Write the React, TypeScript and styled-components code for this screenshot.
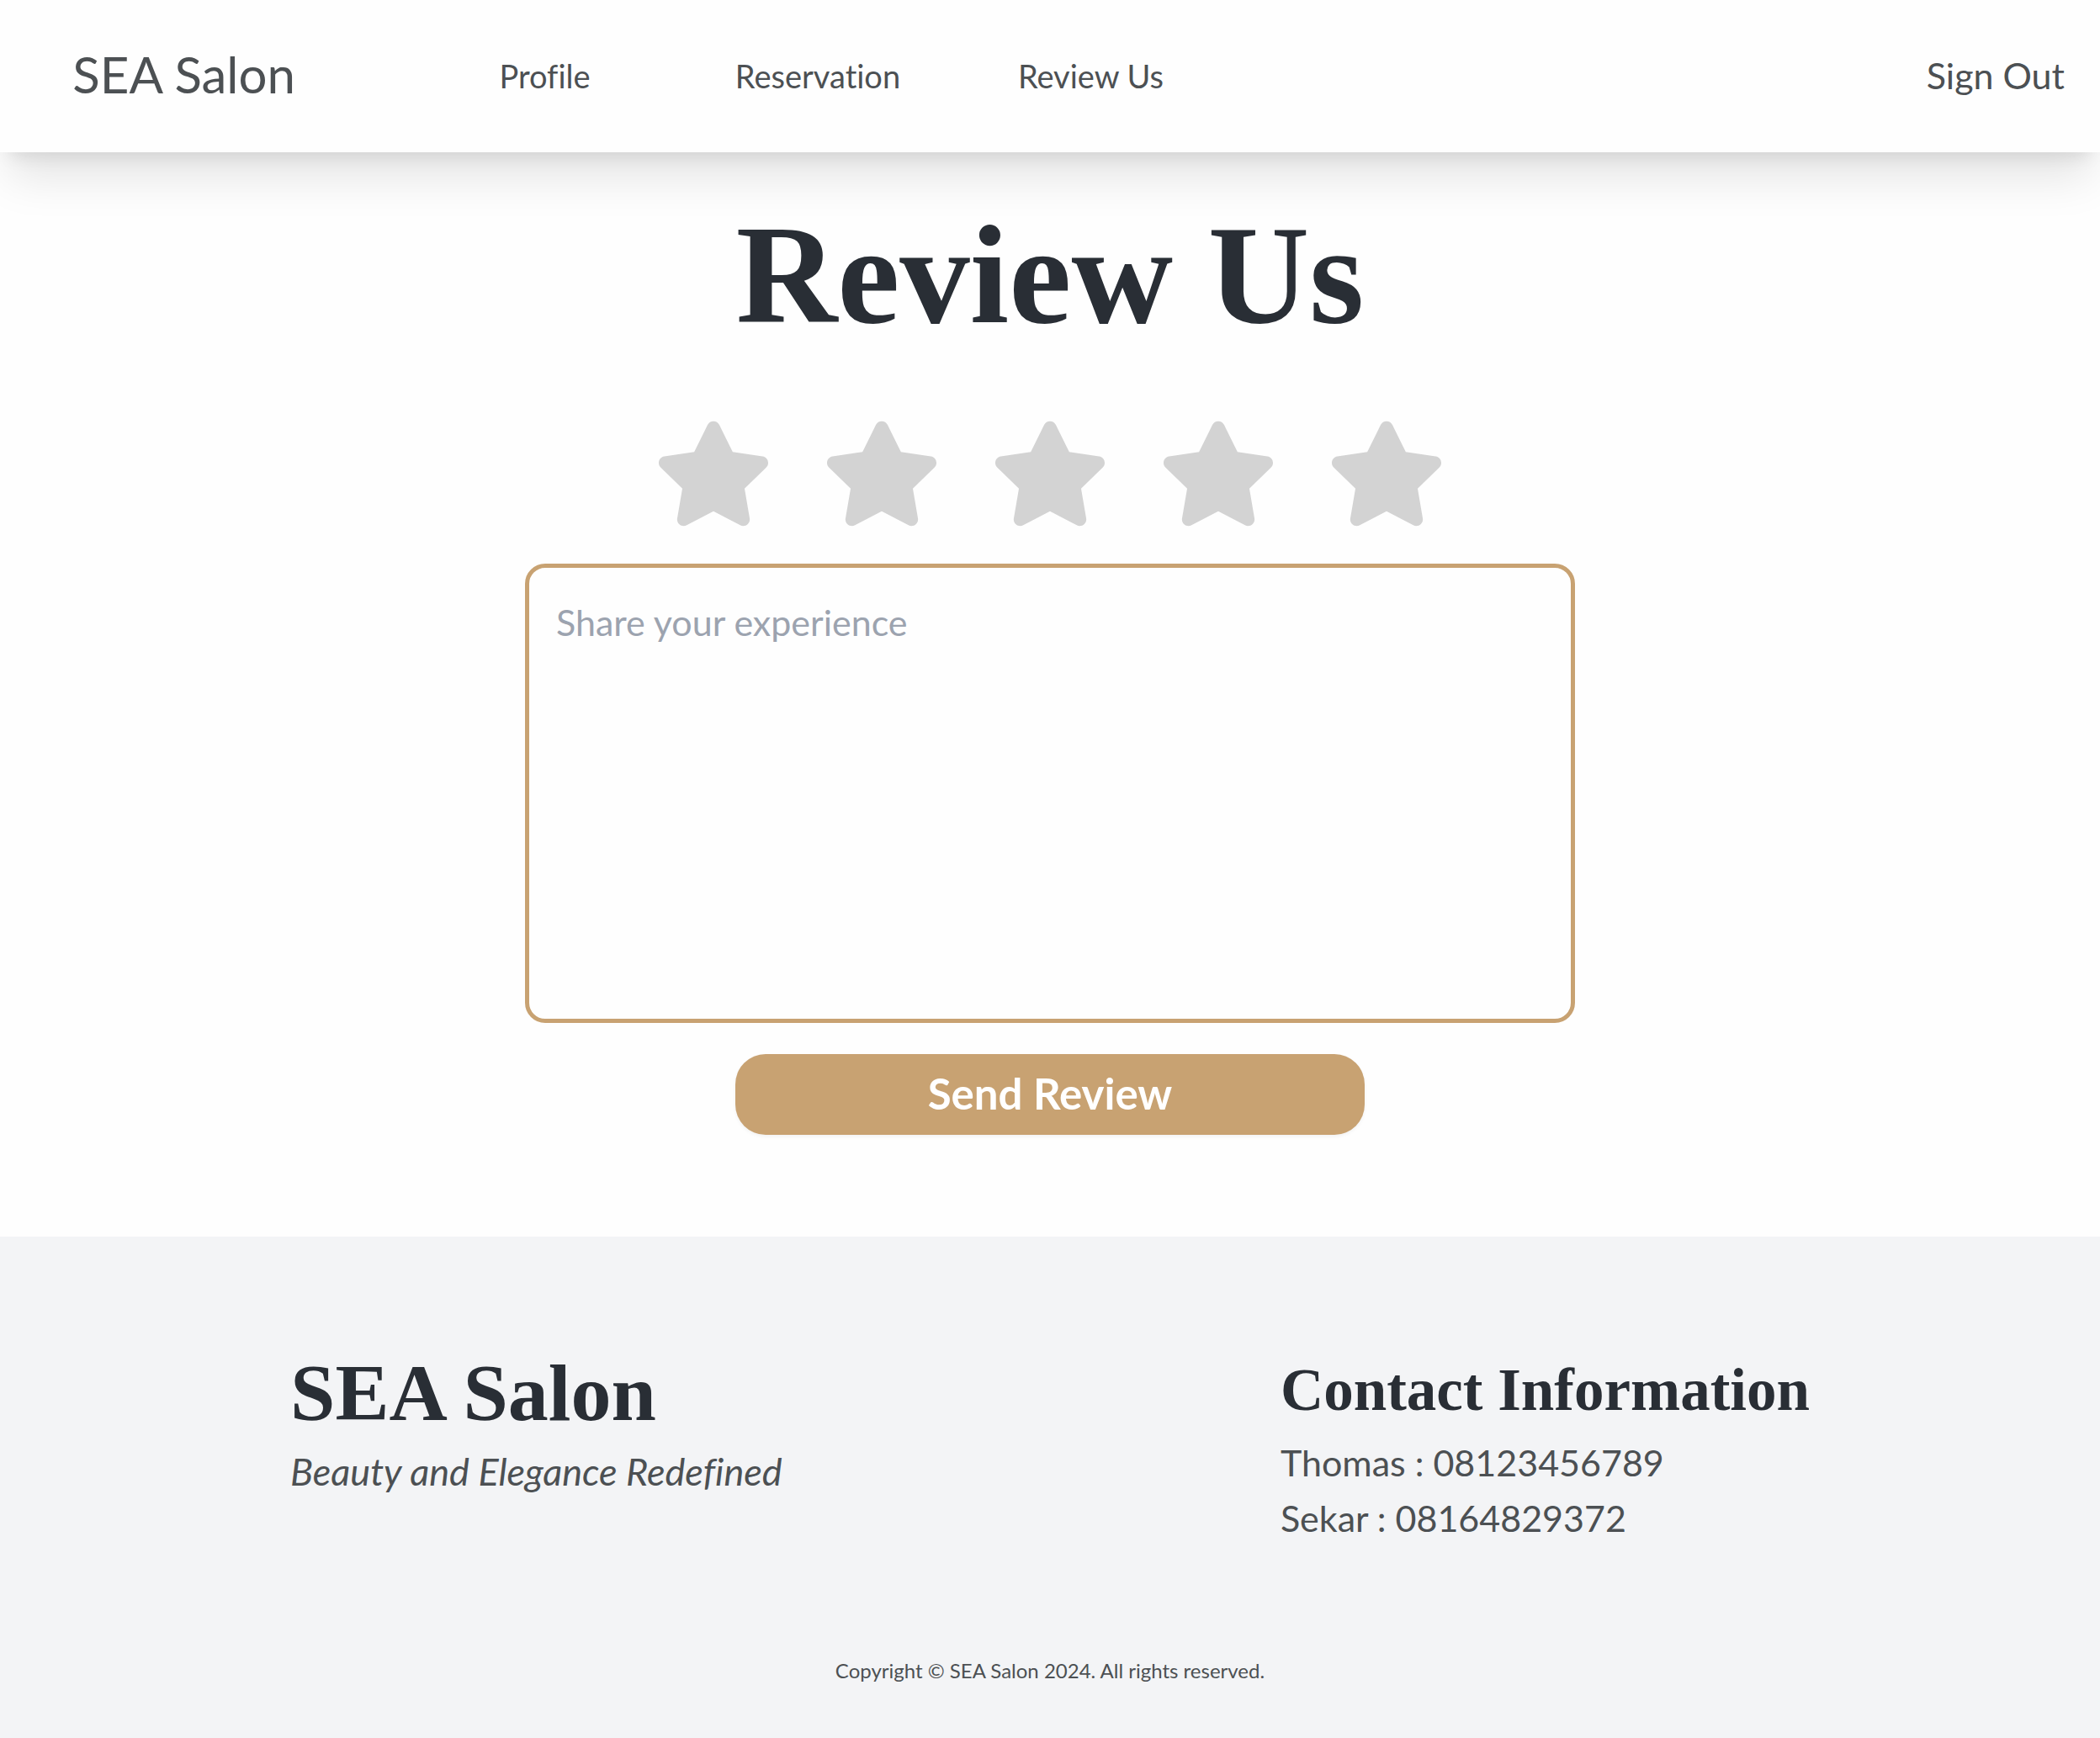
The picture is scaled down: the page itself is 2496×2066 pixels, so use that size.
import React, { useState } from "react";
import styled, { createGlobalStyle } from "styled-components";
import { FaStar } from "react-icons/fa";

const sans = `Lato, "Open Sans", sans-serif`;
const serif = `"Liberation Serif", "DejaVu Serif", serif`;
const gold = "#c8a272";
const ink = "#292e35";
const grey = "#4c5053";

const GlobalStyle = createGlobalStyle`
  * { box-sizing: border-box; }
  body {
    margin: 0;
    background: #fefefe;
    color: ${grey};
    font-family: ${sans};
    font-variant-ligatures: none;
  }
  h1, h2, p { margin: 0; }
  a { color: inherit; text-decoration: none; }
  button, textarea { font-family: inherit; }
`;

const Page = styled.div`
  display: flex;
  flex-direction: column;
  min-height: 100vh;
`;

const Header = styled.header`
  display: flex;
  align-items: center;
  min-height: 181px;
  padding-bottom: 2px;
  background: #fefefe;
  box-shadow: 0 40px 50px -10px rgba(0, 0, 0, 0.1), 0 16px 20px -12px rgba(0, 0, 0, 0.1);
`;

const Brand = styled.a`
  width: 18%;
  padding: 0 12px 3px 0;
  text-align: center;
  font-size: 60px;
  line-height: 72px;
`;

const Nav = styled.nav`
  display: grid;
  grid-template-columns: repeat(3, 1fr);
  width: 39%;
  margin-left: 36px;
  text-align: center;
`;

const NavLink = styled.a`
  font-size: 38px;
  line-height: 60px;
`;

const SignOut = styled.button`
  margin: 0 42px 0 auto;
  padding: 0;
  border: 0;
  background: none;
  color: inherit;
  font-size: 43px;
  line-height: 60px;
  cursor: pointer;
`;

const Main = styled.main`
  display: flex;
  flex: 1;
  flex-direction: column;
  align-items: center;
  padding: 48px 0 121px;
`;

const Title = styled.h1`
  color: ${ink};
  font-family: ${serif};
  font-size: 167px;
  font-weight: 700;
  line-height: 196px;
`;

const ReviewForm = styled.form`
  display: flex;
  flex-direction: column;
  align-items: center;
  width: 100%;
  margin-top: 68px;
`;

const Rating = styled.fieldset`
  display: flex;
  gap: 60px;
  margin: 0;
  padding: 0;
  border: 0;
`;

const HiddenInput = styled.input`
  position: absolute;
  width: 1px;
  height: 1px;
  margin: 0;
  opacity: 0;
`;

const StarLabel = styled.label<{ $active: boolean }>`
  display: flex;
  color: ${(p) => (p.$active ? gold : "#d3d3d3")};
  font-size: 140px;
  cursor: pointer;
`;

const Experience = styled.textarea`
  display: block;
  width: 50%;
  height: 546px;
  margin-top: 37px;
  padding: 32px;
  border: 5px solid ${gold};
  border-radius: 24px;
  background: transparent;
  color: ${grey};
  font-size: 43px;
  line-height: 66px;
  resize: none;
  &::placeholder { color: #9ca3af; opacity: 1; }
`;

const SendButton = styled.button`
  width: 30%;
  height: 96px;
  margin-top: 37px;
  padding: 0 0 3px;
  border: 0;
  border-radius: 36px;
  background: ${gold};
  box-shadow: 0 2px 4px rgba(0, 0, 0, 0.05);
  color: #fff;
  font-size: 51px;
  font-weight: 700;
  cursor: pointer;
`;

const Footer = styled.footer`
  padding: 134px 0 52px;
  background: #f3f4f6;
`;

const FooterColumns = styled.div`
  display: flex;
  justify-content: space-between;
  padding: 0 345px;
`;

const FooterBrand = styled.h2`
  color: ${ink};
  font-family: ${serif};
  font-size: 96px;
  line-height: 104px;
  margin-bottom: 8px;
`;

const ContactTitle = styled.h2`
  color: ${ink};
  font-family: ${serif};
  font-size: 71px;
  line-height: 96px;
  margin-bottom: 6px;
`;

const Tagline = styled.p`
  font-size: 45px;
  font-style: italic;
  line-height: 66px;
`;

const ContactLine = styled.p`
  font-size: 43px;
  line-height: 66px;
`;

const Copyright = styled.p`
  margin-top: 118px;
  text-align: center;
  font-size: 24px;
  line-height: 60px;
`;

export default function App() {
  const [rating, setRating] = useState(0);
  return (
    <>
      <GlobalStyle />
      <Page>
        <Header>
          <Brand href="#">SEA Salon</Brand>
          <Nav>
            <NavLink href="#profile">Profile</NavLink>
            <NavLink href="#reservation">Reservation</NavLink>
            <NavLink href="#review">Review Us</NavLink>
          </Nav>
          <SignOut type="button">Sign Out</SignOut>
        </Header>
        <Main>
          <Title>Review Us</Title>
          <ReviewForm onSubmit={(e) => e.preventDefault()}>
            <Rating aria-label="Rating">
              {[1, 2, 3, 4, 5].map((n) => (
                <StarLabel key={n} $active={n <= rating}>
                  <HiddenInput
                    type="radio"
                    name="rating"
                    value={n}
                    aria-label={`${n}`}
                    checked={rating === n}
                    onChange={() => setRating(n)}
                  />
                  <FaStar />
                </StarLabel>
              ))}
            </Rating>
            <Experience aria-label="Share your experience" placeholder="Share your experience" />
            <SendButton type="submit">Send Review</SendButton>
          </ReviewForm>
        </Main>
        <Footer>
          <FooterColumns>
            <div>
              <FooterBrand>SEA Salon</FooterBrand>
              <Tagline>Beauty and Elegance Redefined</Tagline>
            </div>
            <div>
              <ContactTitle>Contact Information</ContactTitle>
              <ContactLine>Thomas : 08123456789</ContactLine>
              <ContactLine>Sekar : 08164829372</ContactLine>
            </div>
          </FooterColumns>
          <Copyright>Copyright © SEA Salon 2024. All rights reserved.</Copyright>
        </Footer>
      </Page>
    </>
  );
}
